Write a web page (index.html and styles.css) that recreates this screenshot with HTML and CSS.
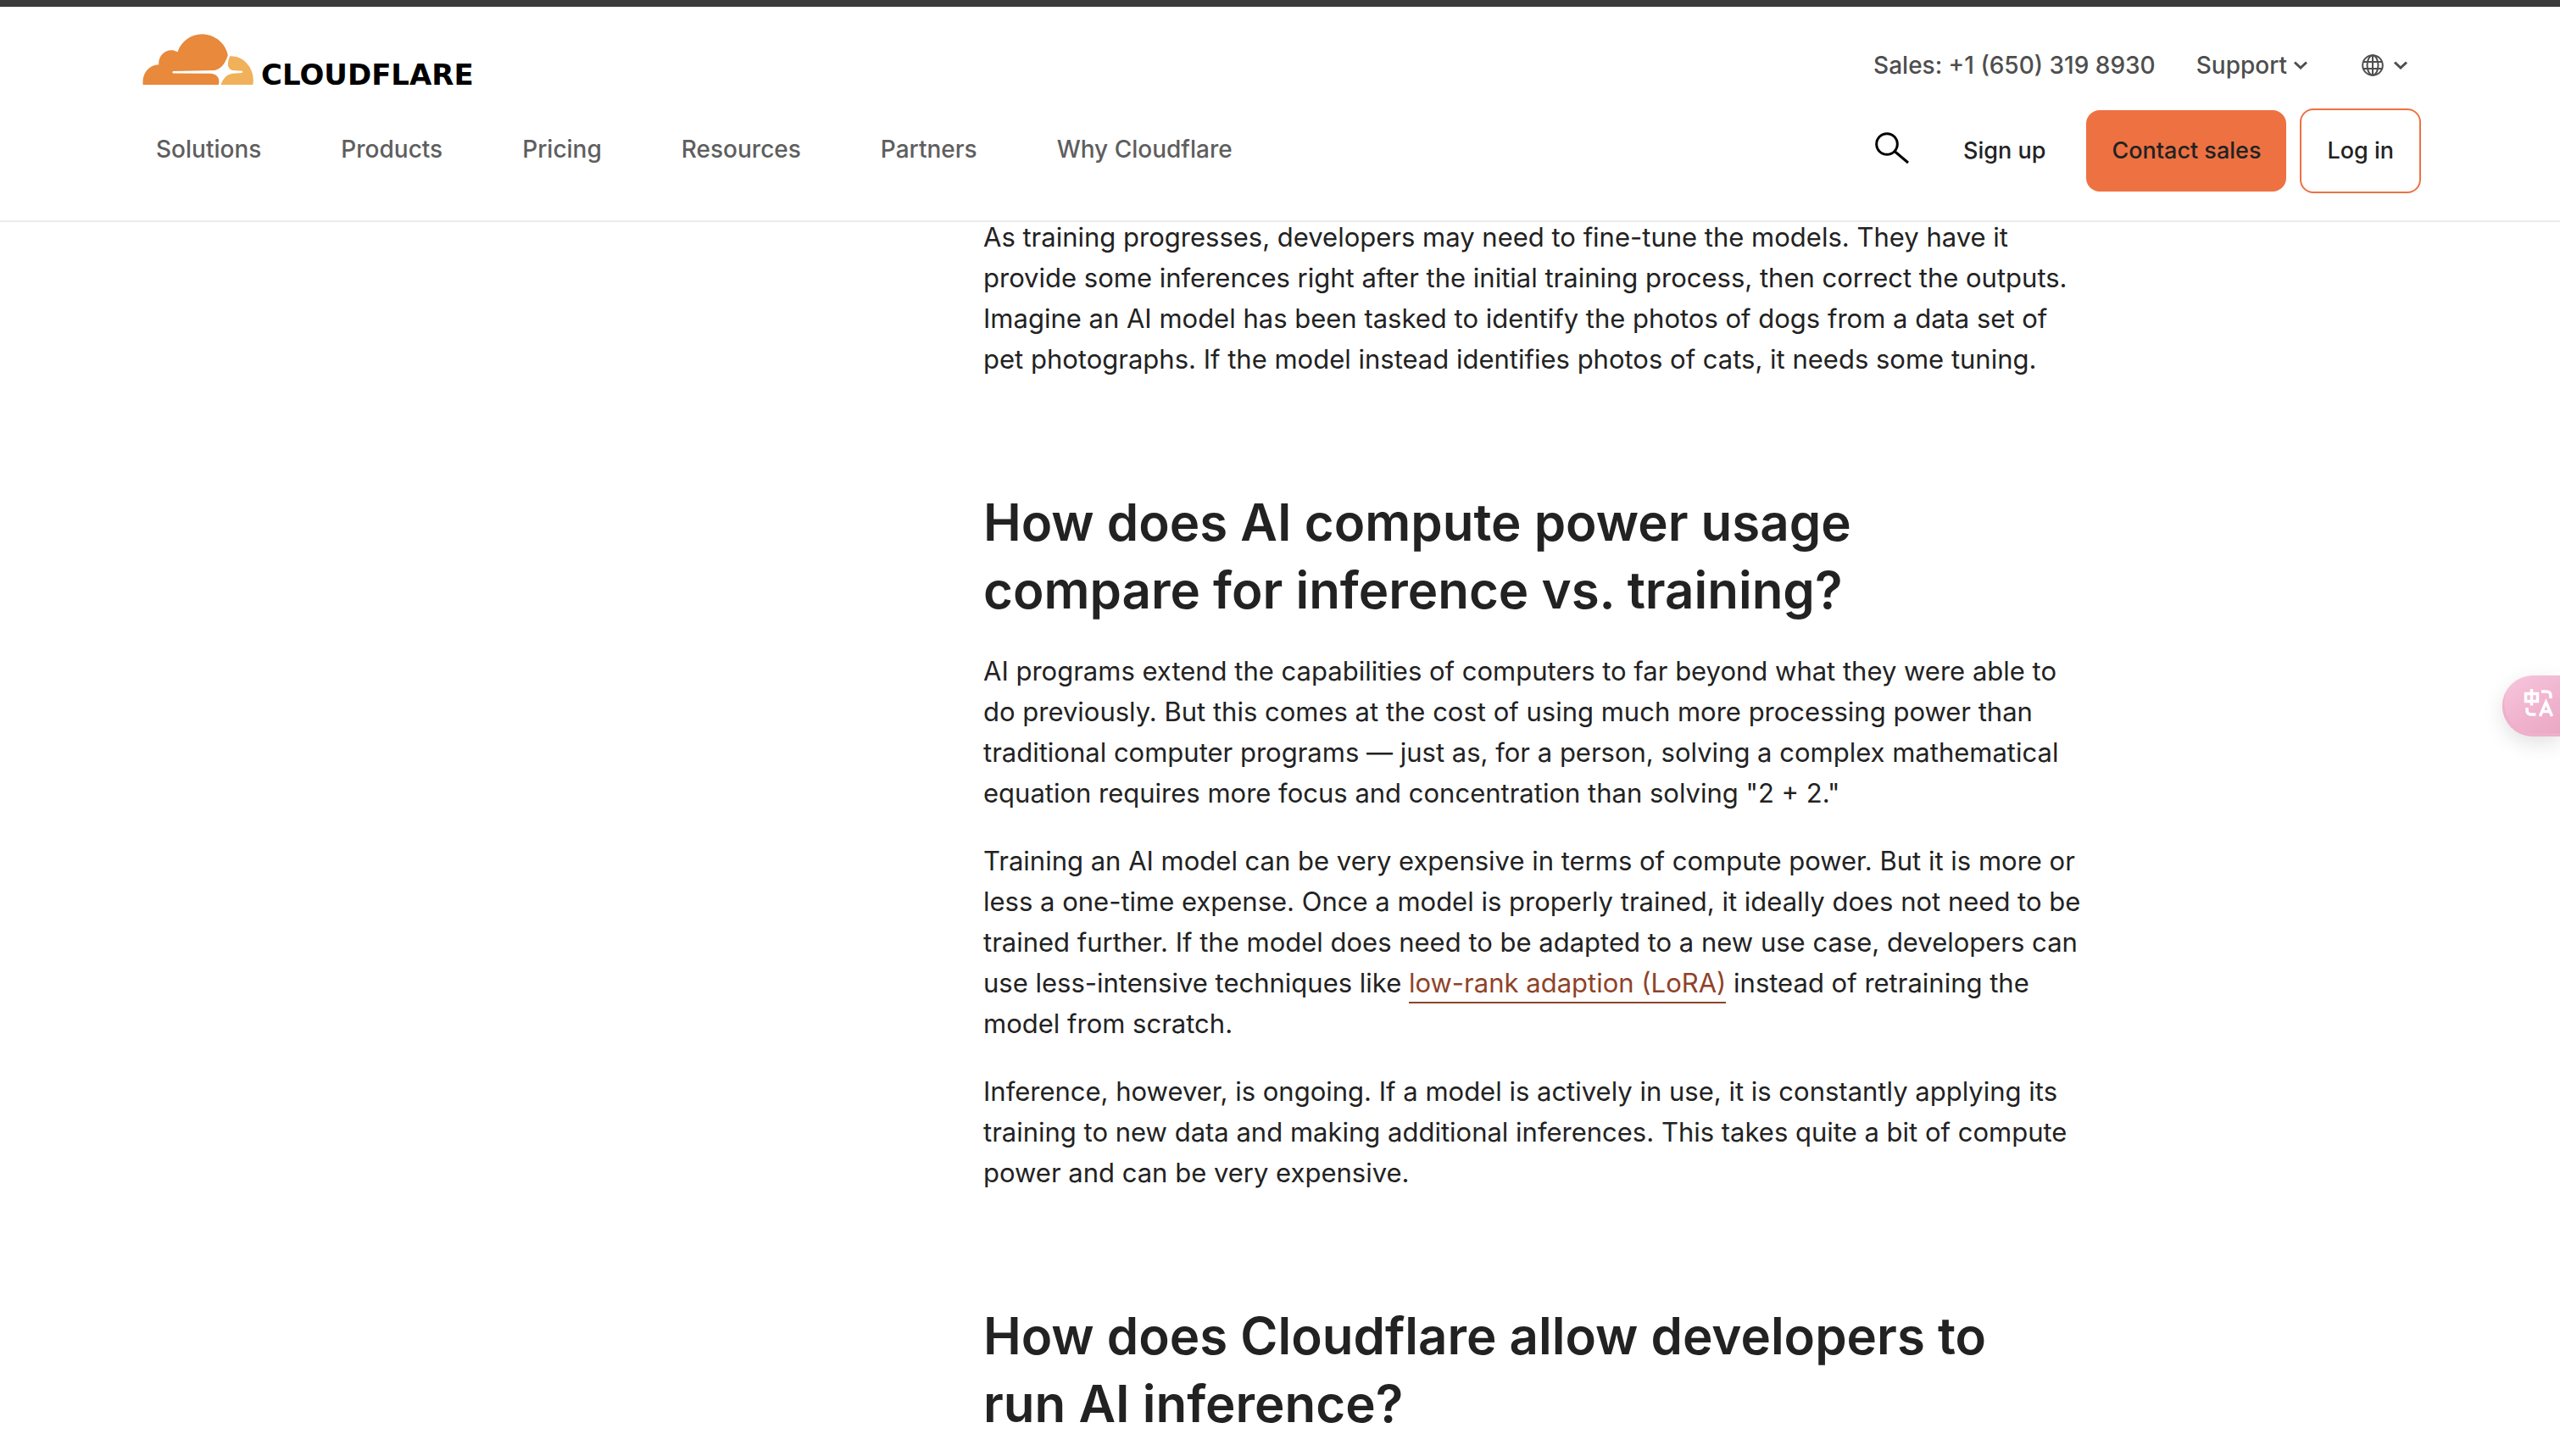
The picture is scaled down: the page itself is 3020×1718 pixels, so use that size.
FILE: index.html
```html
<!DOCTYPE html>
<html lang="en">
<head>
  <meta charset="utf-8">
  <meta name="viewport" content="width=device-width, initial-scale=1">
  <title>AI inference vs. training | Cloudflare</title>
  <link rel="stylesheet" href="styles.css">
</head>
<body>
  <header class="site-header">
    <div class="header-row header-top">
      <a class="logo" href="#" aria-label="Cloudflare home">
        <svg class="logo-mark" viewBox="84 119 396 181" aria-hidden="true">
          <path fill="#e8893b" d="M85 300C80 262 104 229 141 228C138 192 174 164 208 183C222 145 255 120 296 120C340 120 380 154 387 195C379 217 371 239 340 249L192 252Q187 256 192 259L325 260C349 261 360 278 354 300Z"/>
          <path fill="#f0b15a" d="M394 198C449 196 486 249 476 300H362C368 283 379 264 404 260L436 258Q443 255 438 251L405 249C382 242 385 221 394 198Z"/>
        </svg>
        <span class="logo-text">CLOUDFLARE</span>
      </a>
      <div class="utility">
        <a class="utility-item" href="tel:+16503198930">Sales: +1 (650) 319 8930</a>
        <button class="utility-item" type="button">Support
          <svg class="chevron" viewBox="0 0 16 10" aria-hidden="true"><path d="M1 1.500L8 8L15 1.500"/></svg>
        </button>
        <button class="utility-item language" type="button" aria-label="Select language">
          <svg class="globe" viewBox="0 0 26 26" aria-hidden="true">
            <circle cx="13" cy="13" r="11.800"/>
            <ellipse cx="13" cy="13" rx="6.500" ry="11.800"/>
            <path d="M13 1V25M2 9H24M2 17H24"/>
          </svg>
          <svg class="chevron" viewBox="0 0 16 10" aria-hidden="true"><path d="M1 1.500L8 8L15 1.500"/></svg>
        </button>
      </div>
    </div>
    <div class="header-row">
      <nav class="main-nav" aria-label="Main">
        <a href="#">Solutions</a>
        <a href="#">Products</a>
        <a href="#">Pricing</a>
        <a href="#">Resources</a>
        <a href="#">Partners</a>
        <a href="#">Why Cloudflare</a>
      </nav>
      <div class="actions">
        <button class="search" type="button" aria-label="Search">
          <svg viewBox="0 0 40 40" aria-hidden="true"><circle cx="14" cy="14" r="12.300"/><path d="M23 22.500L39 36"/></svg>
        </button>
        <a class="sign-up" href="#">Sign up</a>
        <a class="button button-primary" href="#">Contact sales</a>
        <a class="button button-outline" href="#">Log in</a>
      </div>
    </div>
  </header>

  <main class="page">
    <article class="article">
      <section>
        <p>As training progresses, developers may need to fine-tune the models. They have it provide some inferences right after the initial training process, then correct the outputs. Imagine an AI model has been tasked to identify the photos of dogs from a data set of pet photographs. If the model instead identifies photos of cats, it needs some tuning.</p>
      </section>
      <section>
        <h2>How does AI compute power usage compare for inference vs. training?</h2>
        <p>AI programs extend the capabilities of computers to far beyond what they were able to do previously. But this comes at the cost of using much more processing power than traditional computer programs — just as, for a person, solving a complex mathematical equation requires more focus and concentration than solving "2 + 2."</p>
        <p>Training an AI model can be very expensive in terms of compute power. But it is more or less a one-time expense. Once a model is properly trained, it ideally does not need to be trained further. If the model does need to be adapted to a new use case, developers can use less-intensive techniques like <a href="#">low-rank adaption (LoRA)</a> instead of retraining the model from scratch.</p>
        <p>Inference, however, is ongoing. If a model is actively in use, it is constantly applying its training to new data and making additional inferences. This takes quite a bit of compute power and can be very expensive.</p>
      </section>
      <section>
        <h2>How does Cloudflare allow developers to run AI inference?</h2>
      </section>
    </article>
  </main>

  <button class="translate" type="button" aria-label="Translate page">
    <svg viewBox="0 0 36 36" aria-hidden="true">
      <path d="M2.500 6.500H16.500V15.500H2.500ZM9.500 1V20.500"/>
      <path d="M21 4H27Q32 4 32 9V12M4 23V26Q4 31 9 31H14.500"/>
      <path d="M19.500 33L26.500 16.500L33.500 33M22 27.500H31"/>
    </svg>
  </button>
</body>
</html>
```

FILE: styles.css
```css
* {
  box-sizing: border-box;
}

body {
  margin: 0;
  background: #fff;
  color: #222;
  font-family: Inter, "Liberation Sans", sans-serif;
  font-size: 31px;
  line-height: 48px;
}

button {
  padding: 0;
  border: 0;
  background: none;
  color: inherit;
  font: inherit;
  cursor: pointer;
}

svg {
  display: block;
  fill: none;
}

/* Header */

.site-header {
  position: fixed;
  inset: 0 0 auto;
  z-index: 1;
  display: flex;
  flex-direction: column;
  gap: 28px;
  padding: 32px 164px 32px 168px;
  border-top: 8px solid #3b3b3b;
  border-bottom: 2px solid #ebebeb;
  background: #fff;
  font-size: 28px;
  font-weight: 500;
}

.site-header a {
  color: inherit;
  text-decoration: none;
}

.header-row {
  display: flex;
  align-items: center;
  justify-content: space-between;
}

.header-top {
  align-items: flex-end;
}

.logo {
  display: flex;
  align-items: flex-end;
  gap: 8px;
}

.logo-mark {
  width: 132px;
  height: 60px;
}

.site-header .logo-text {
  color: #000;
  font-family: "DejaVu Sans", sans-serif;
  font-size: 34px;
  font-weight: 700;
  line-height: 24px;
}

.utility {
  display: flex;
  gap: 48px;
  padding-right: 16px;
  color: #4e4e4e;
  line-height: 46px;
}

.utility-item {
  display: flex;
  align-items: center;
  gap: 8px;
}

.language {
  gap: 12px;
  padding-left: 16px;
}

.chevron {
  width: 16px;
  height: 10px;
  stroke: currentColor;
  stroke-width: 3;
}

.globe {
  width: 26px;
  height: 26px;
  stroke: currentColor;
  stroke-width: 2;
}

.main-nav {
  display: flex;
  gap: 94px;
  padding: 0 0 4px 16px;
  color: #5e5e5e;
}

.actions {
  display: flex;
  align-items: center;
  font-size: 27px;
}

.search {
  margin-right: 64px;
  padding-bottom: 4px;
}

.search svg {
  width: 40px;
  height: 40px;
  stroke: #000;
  stroke-width: 3;
}

.sign-up {
  margin-right: 48px;
}

.button {
  padding: 24px 30px;
  border-radius: 16px;
}

.button-primary {
  margin-right: 16px;
  background: #ee7142;
}

.button-outline {
  border: 2px solid #ee7142;
}

/* Article */

.page {
  display: grid;
  grid-template-columns: 1160fr 1300fr 560fr;
  padding-top: 256px;
}

.article {
  grid-column: 2;
  display: grid;
  gap: 128px;
}

.article p {
  margin: 0 0 32px;
}

.article p:last-child {
  margin-bottom: 0;
}

.article h2 {
  max-width: 1240px;
  margin: 0 0 32px;
  font-size: 60px;
  font-weight: 600;
  line-height: 80px;
}

.article section:last-child h2 {
  margin-bottom: 0;
}

.article a {
  padding-bottom: 4px;
  border-bottom: 2px solid #8f4328;
  color: #8f4328;
  text-decoration: none;
}

/* Floating translate tab */

.translate {
  position: fixed;
  top: 797px;
  right: 0;
  z-index: 2;
  width: 68px;
  height: 72px;
  padding: 0 0 6px 25px;
  border-radius: 36px 0 0 36px;
  background: linear-gradient(150deg, #f7c6dc, #eaa6c4);
  box-shadow: inset 2px -4px 0 #eeb0ca, 0 8px 24px #0000001f;
}

.translate svg {
  width: 36px;
  height: 36px;
  stroke: #fff;
  stroke-width: 3.500;
}
```
